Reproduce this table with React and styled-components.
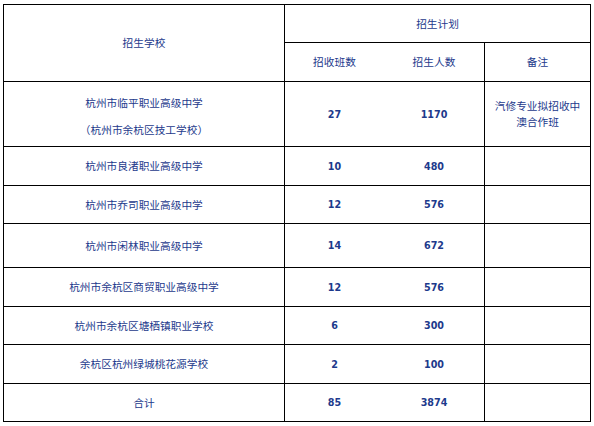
import React from "react";
import styled, { createGlobalStyle } from "styled-components";

const GlobalStyle = createGlobalStyle`
  body {
    margin: 0;
    background: #ffffff;
  }
`;

const Page = styled.div`
  padding: 4px 0 0 3px;
`;

const Table = styled.table`
  border-collapse: separate;
  border-spacing: 0;
  table-layout: fixed;
  width: 588px;
  border-top: 1px solid #000;
  border-left: 1px solid #000;
  font-family: "Noto Sans CJK SC", "Noto Sans", sans-serif;
  font-size: 10.7px;
  color: #1d3a8c;
`;

const Cell = styled.td`
  box-sizing: border-box;
  height: ${(p) => p.$h}px;
  padding: 0;
  text-align: center;
  vertical-align: middle;
  border-bottom: 1px solid #000;
  border-right: ${(p) => (p.$open ? "none" : "1px solid #000")};
  line-height: 16px;
`;

const Num = styled.span`
  font-family: "DejaVu Sans", "Liberation Sans", sans-serif;
  font-weight: 700;
  font-size: 9.6px;
`;

const SchoolName = styled.div`
  line-height: 27px;
  padding-top: 3px;
`;

const rows = [
  { name: "杭州市良渚职业高级中学", classes: 10, people: 480, h: 39 },
  { name: "杭州市乔司职业高级中学", classes: 12, people: 576, h: 38 },
  { name: "杭州市闲林职业高级中学", classes: 14, people: 672, h: 44 },
  { name: "杭州市余杭区商贸职业高级中学", classes: 12, people: 576, h: 39 },
  { name: "杭州市余杭区塘栖镇职业学校", classes: 6, people: 300, h: 38 },
  { name: "余杭区杭州绿城桃花源学校", classes: 2, people: 100, h: 39 },
  { name: "合计", classes: 85, people: 3874, h: 38 },
];

export default function App() {
  return (
    <Page>
      <GlobalStyle />
      <Table>
        <colgroup>
          <col style={{ width: 281 }} />
          <col style={{ width: 99 }} />
          <col style={{ width: 101 }} />
          <col style={{ width: 106 }} />
        </colgroup>
        <tbody>
          <tr>
            <Cell rowSpan={2} $h={77}>招生学校</Cell>
            <Cell colSpan={3} $h={38}>招生计划</Cell>
          </tr>
          <tr>
            <Cell $h={39} $open>招收班数</Cell>
            <Cell $h={39}>招生人数</Cell>
            <Cell $h={39}>备注</Cell>
          </tr>
          <tr>
            <Cell $h={65}>
              <SchoolName>
                杭州市临平职业高级中学
                <br />
                （杭州市余杭区技工学校）
              </SchoolName>
            </Cell>
            <Cell $h={65} $open><Num>27</Num></Cell>
            <Cell $h={65}><Num>1170</Num></Cell>
            <Cell $h={65}>
              汽修专业拟招收中
              <br />
              澳合作班
            </Cell>
          </tr>
          {rows.map((r) => (
            <tr key={r.name}>
              <Cell $h={r.h}>{r.name}</Cell>
              <Cell $h={r.h} $open><Num>{r.classes}</Num></Cell>
              <Cell $h={r.h}><Num>{r.people}</Num></Cell>
              <Cell $h={r.h} />
            </tr>
          ))}
        </tbody>
      </Table>
    </Page>
  );
}
